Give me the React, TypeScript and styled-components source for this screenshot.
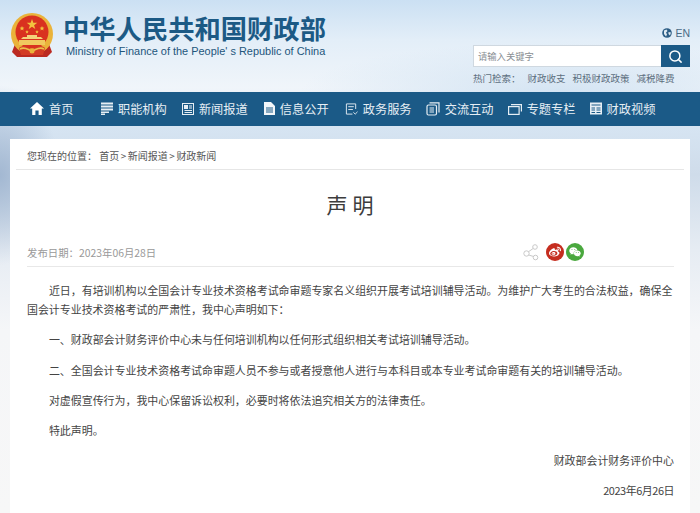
import React from 'react';
import styled, { createGlobalStyle } from 'styled-components';
import { Search } from 'lucide-react';
import { FaWeibo, FaWeixin } from 'react-icons/fa';

const CJK = `"Noto Sans CJK SC", "Liberation Sans", sans-serif`;

const GlobalStyle = createGlobalStyle`
  html, body {
    margin: 0;
    padding: 0;
    height: 100%;
    overflow: hidden;
  }
  body {
    font-family: ${CJK};
    background:
      radial-gradient(ellipse 60px 90px at 0 175px, #a3b8d2 0%, rgba(163, 184, 210, 0) 100%),
      linear-gradient(180deg, #cbe0f3 0, #e3eef8 40px, #f0f5fa 88px, #d6e4f2 128px, #cfdcea 175px, #e6ecf3 250px, #f5f6f8 330px, #f7f7f7 513px);
  }
`;

const Page = styled.div`
  width: 700px;
  height: 513px;
  overflow: hidden;
  display: flex;
  flex-direction: column;
`;

const Header = styled.header`
  height: 92px;
  box-sizing: border-box;
  padding: 13px 10px 0 11px;
  display: flex;
  justify-content: space-between;
  background:
    radial-gradient(ellipse 260px 50px at 560px 92px, rgba(205, 224, 241, 0.8) 0%, rgba(205, 224, 241, 0) 100%);
`;

const Brand = styled.div`
  display: flex;
  gap: 10px;
`;

const BrandText = styled.div`
  display: flex;
  flex-direction: column;
`;

const BrandTitle = styled.div`
  font-size: 26.3px;
  line-height: 30px;
  font-weight: 700;
  color: #1c5a85;
  white-space: nowrap;
`;

const BrandEnglish = styled.div`
  font-family: "Liberation Sans", sans-serif;
  font-size: 10.95px;
  line-height: 14px;
  margin: 1px 0 0 3px;
  color: #23567c;
  white-space: nowrap;
`;

const Tools = styled.div`
  width: 217px;
  display: flex;
  flex-direction: column;
  padding-top: 14px;
`;

const LangLink = styled.div`
  display: flex;
  justify-content: flex-end;
  align-items: center;
  gap: 3px;
  height: 12px;
  font-family: "Liberation Sans", sans-serif;
  font-size: 10.5px;
  color: #4a6a86;
`;

const SearchBox = styled.div`
  display: flex;
  height: 22px;
  margin-top: 6px;
`;

const SearchInput = styled.div`
  flex: 1;
  box-sizing: border-box;
  background: #fff;
  border: 1px solid #cfd8e0;
  border-right: 0;
  padding-left: 4px;
  font-size: 9.3px;
  line-height: 20px;
  color: #8a8f94;
`;

const SearchButton = styled.div`
  width: 29px;
  background: #1b5a87;
  color: #fff;
  display: flex;
  align-items: center;
  justify-content: center;
`;

const HotRow = styled.div`
  display: flex;
  margin-top: 4px;
  font-size: 9.5px;
  line-height: 14px;
  color: #5d6f7e;
  white-space: nowrap;
`;

const HotLink = styled.span<{ $gap: number }>`
  margin-left: ${p => p.$gap}px;
`;

const Nav = styled.nav`
  height: 34px;
  flex: none;
  box-sizing: border-box;
  background: #1b5a87;
  display: flex;
  align-items: center;
  padding: 0 0 1px 30px;
`;

const NavItem = styled.div<{ $gap: number }>`
  display: flex;
  align-items: center;
  gap: 5px;
  margin-right: ${p => p.$gap}px;
  font-size: 12.2px;
  color: #e6eef4;
  white-space: nowrap;
  svg {
    display: block;
    flex: none;
  }
`;

const Main = styled.main`
  flex: 1;
  padding: 13px 10px 0;
  min-height: 0;
`;

const Card = styled.article`
  height: 100%;
  background: #fff;
`;

const Crumbs = styled.div`
  height: 31px;
  box-sizing: border-box;
  margin: 0 6px;
  padding: 10px 0 0 11px;
  border-bottom: 1px solid #e6e6e6;
  font-size: 10px;
  line-height: 14px;
  color: #555;
`;

const CrumbSep = styled.span`
  margin: 0 1.5px;
`;

const Title = styled.h1`
  margin: 0;
  box-sizing: border-box;
  padding: 17px 0 0 5px;
  height: 52px;
  text-align: center;
  font-size: 21px;
  line-height: 34px;
  font-weight: 400;
  letter-spacing: 5px;
  color: #3c3c3c;
`;

const Content = styled.div`
  padding: 0 16px 0 17px;
`;

const Meta = styled.div`
  height: 45px;
  box-sizing: border-box;
  display: flex;
  align-items: center;
  justify-content: space-between;
  padding: 17px 90px 0 0;
  border-bottom: 1px solid #e8e8e8;
  font-size: 10.4px;
  color: #999;
`;

const Share = styled.div`
  display: flex;
  align-items: center;
  gap: 2px;
  margin-bottom: 1px;
  > svg {
    margin-right: 5px;
  }
`;

const ShareBadge = styled.span<{ $bg: string }>`
  width: 18px;
  height: 18px;
  border-radius: 50%;
  background: ${p => p.$bg};
  color: #fff;
  display: flex;
  align-items: center;
  justify-content: center;
`;

const Body = styled.div`
  padding-top: 14px;
`;

const Para = styled.p<{ $right?: boolean }>`
  margin: 0 0 11px;
  font-size: 10.95px;
  line-height: 19.2px;
  color: #444;
  text-indent: ${p => (p.$right ? 0 : '2em')};
  text-align: ${p => (p.$right ? 'right' : 'left')};
`;

const DatePara = styled(Para)`
  letter-spacing: -0.45px;
`;

const HomeIcon = () => (
  <svg width="14" height="13" viewBox="0 0 14 13">
    <path d="M7 0 L14 6.5 H11.8 V13 H8.6 V8.5 H5.4 V13 H2.2 V6.5 H0 Z" fill="#fff" />
  </svg>
);

const ListIcon = () => (
  <svg width="12" height="13" viewBox="0 0 12 13" fill="#e6eef4">
    <rect x="0" y="0.5" width="12" height="2" />
    <rect x="0" y="3.5" width="12" height="2" />
    <rect x="0" y="6.5" width="12" height="2" />
    <rect x="0" y="9.5" width="8" height="1.5" />
    <rect x="0" y="11.5" width="4" height="1.5" />
  </svg>
);

const NewsIcon = () => (
  <svg width="12" height="13" viewBox="0 0 12 13" fill="none" stroke="#e6eef4">
    <rect x="0.5" y="1.5" width="11" height="11" />
    <rect x="2.5" y="3.5" width="3" height="3" fill="#e6eef4" />
    <path d="M7 4h3M7 6h3M2.5 8.5h7.5M2.5 10.5h7.5" />
  </svg>
);

const DocIcon = () => (
  <svg width="11" height="13" viewBox="0 0 11 13">
    <path d="M0 0 H7 L11 4 V13 H0 Z" fill="#f2f6f9" />
    <path d="M2 6h7M2 8h7M2 10h7" stroke="#1b5a87" />
  </svg>
);

const ServiceIcon = () => (
  <svg width="13" height="14" viewBox="0 0 14 14" fill="none" stroke="#e6eef4">
    <path d="M11.5 7V1.5H1.5V12.5H8" />
    <path d="M3.5 4.5h6M3.5 7.5h5" />
    <path d="M9 10.5l2 2 2.5-2.5" />
  </svg>
);

const ExchangeIcon = () => (
  <svg width="14" height="14" viewBox="0 0 14 14" fill="none" stroke="#e6eef4" strokeWidth="1.2">
    <rect x="1" y="3" width="9.5" height="10" rx="1.5" />
    <path d="M3.5 0.8H13V10.5M3.5 6h4.5M3.5 8h4.5M3.5 10h4.5" />
  </svg>
);

const TopicIcon = () => (
  <svg width="14" height="12" viewBox="0 0 14 12" fill="none" stroke="#e6eef4" strokeWidth="1.2">
    <rect x="0.6" y="3.6" width="10.5" height="7.8" />
    <path d="M3 1.6H13.4V8.5" />
  </svg>
);

const VideoIcon = () => (
  <svg width="12" height="13" viewBox="0 0 12 13">
    <rect x="0" y="0.5" width="12" height="12" fill="#e6eef4" />
    <path d="M1.5 3h9M1.5 6h3.5M1.5 8h3.5M1.5 10.5h3.5M6.5 6h4M6.5 8h4M6.5 10.5h4" stroke="#1b5a87" />
  </svg>
);

const GlobeIcon = () => (
  <svg width="10" height="10" viewBox="0 0 10 10">
    <circle cx="5" cy="5" r="4.8" fill="#2c5d85" />
    <path d="M2 2.5l2.5-1 1 1.5-1.5 1.5 1 2-1 2L2 6zM6.5 4l2.5 0.5L8 7.5 6.5 6z" fill="#dfe9f1" />
  </svg>
);

const ShareIcon = () => (
  <svg width="16" height="17" viewBox="0 0 16 17" fill="none" stroke="#c9c9c9" strokeWidth="1">
    <circle cx="3.5" cy="9.5" r="2.7" />
    <circle cx="12" cy="3" r="2.3" />
    <circle cx="12.5" cy="13.5" r="2.3" />
    <path d="M5.5 7.7L10.3 4.4M5.8 11L10.5 12.5" />
  </svg>
);

const Emblem = () => (
  <svg width="42" height="45" viewBox="0 0 42 45">
    <path d="M4 31 L1 39 L6 44 H36 L41 39 L38 31 Z" fill="#bb2a22" />
    <circle cx="21" cy="21" r="21" fill="#eab33a" />
    <circle cx="21" cy="19" r="16.5" fill="#d9311f" />
    <path d="M21 6 l1.3 3.8 h4 l-3.2 2.4 1.2 3.8 -3.3 -2.3 -3.3 2.3 1.2 -3.8 -3.2 -2.4 h4 Z" fill="#f2c23f" />
    <path d="M11 13l.7 1.6 1.7.1-1.3 1.1.4 1.7-1.5-.9-1.5.9.4-1.7-1.3-1.1 1.7-.1ZM31 13l.7 1.6 1.7.1-1.3 1.1.4 1.7-1.5-.9-1.5.9.4-1.7-1.3-1.1 1.7-.1ZM16 17l.5 1.2 1.3.1-1 .8.3 1.3-1.1-.7-1.1.7.3-1.3-1-.8 1.3-.1ZM26 17l.5 1.2 1.3.1-1 .8.3 1.3-1.1-.7-1.1.7.3-1.3-1-.8 1.3-.1Z" fill="#f2c23f" />
    <path d="M10 26 H32 L30 24 H26 V22 H16 V24 H12 Z" fill="#f3d27a" />
    <rect x="8" y="27" width="26" height="5" fill="#f0c95f" />
    <path d="M8 35 C13 31 17 34 21 37 C25 34 29 31 34 35 L32 42 H10 Z" fill="#d33b25" />
    <path d="M9 36 C14 33 17 37 21 38 C25 37 28 33 33 36" stroke="#edc04a" strokeWidth="1.6" fill="none" />
    <circle cx="21" cy="38" r="2.5" fill="#eab33a" />
  </svg>
);

const navItems = [
  { label: '首页', Icon: HomeIcon, gap: 27.6 },
  { label: '职能机构', Icon: ListIcon, gap: 15.2 },
  { label: '新闻报道', Icon: NewsIcon, gap: 16.2 },
  { label: '信息公开', Icon: DocIcon, gap: 16.2 },
  { label: '政务服务', Icon: ServiceIcon, gap: 14.2 },
  { label: '交流互动', Icon: ExchangeIcon, gap: 14.2 },
  { label: '专题专栏', Icon: TopicIcon, gap: 14.2 },
  { label: '财政视频', Icon: VideoIcon, gap: 0 },
];

const paragraphs = [
  '近日，有培训机构以全国会计专业技术资格考试命审题专家名义组织开展考试培训辅导活动。为维护广大考生的合法权益，确保全国会计专业技术资格考试的严肃性，我中心声明如下：',
  '一、财政部会计财务评价中心未与任何培训机构以任何形式组织相关考试培训辅导活动。',
  '二、全国会计专业技术资格考试命审题人员不参与或者授意他人进行与本科目或本专业考试命审题有关的培训辅导活动。',
  '对虚假宣传行为，我中心保留诉讼权利，必要时将依法追究相关方的法律责任。',
  '特此声明。',
];

const App: React.FC = () => (
  <Page>
    <GlobalStyle />
    <Header>
      <Brand>
        <Emblem />
        <BrandText>
          <BrandTitle>中华人民共和国财政部</BrandTitle>
          <BrandEnglish>Ministry of Finance of the People' s Republic of China</BrandEnglish>
        </BrandText>
      </Brand>
      <Tools>
        <LangLink>
          <GlobeIcon />
          EN
        </LangLink>
        <SearchBox>
          <SearchInput>请输入关键字</SearchInput>
          <SearchButton>
            <Search size={15} strokeWidth={2.4} />
          </SearchButton>
        </SearchBox>
        <HotRow>
          热门检索：
          <HotLink $gap={7}>财政收支</HotLink>
          <HotLink $gap={7}>积极财政政策</HotLink>
          <HotLink $gap={7}>减税降费</HotLink>
        </HotRow>
      </Tools>
    </Header>
    <Nav>
      {navItems.map(({ label, Icon, gap }) => (
        <NavItem key={label} $gap={gap}>
          <Icon />
          {label}
        </NavItem>
      ))}
    </Nav>
    <Main>
      <Card>
        <Crumbs>
          您现在的位置： 首页<CrumbSep>&gt;</CrumbSep>新闻报道<CrumbSep>&gt;</CrumbSep>财政新闻
        </Crumbs>
        <Title>声明</Title>
        <Content>
          <Meta>
            <span>发布日期：2023年06月28日</span>
            <Share>
              <ShareIcon />
              <ShareBadge $bg="#c52d1f">
                <FaWeibo size={12} />
              </ShareBadge>
              <ShareBadge $bg="#4aa83e">
                <FaWeixin size={12} />
              </ShareBadge>
            </Share>
          </Meta>
          <Body>
            {paragraphs.map(text => (
              <Para key={text}>{text}</Para>
            ))}
            <Para $right>财政部会计财务评价中心</Para>
            <DatePara $right>2023年6月26日</DatePara>
          </Body>
        </Content>
      </Card>
    </Main>
  </Page>
);

export default App;
